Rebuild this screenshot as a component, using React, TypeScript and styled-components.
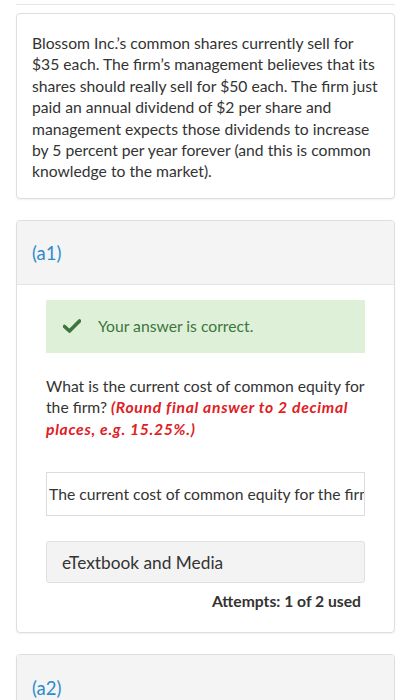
import React from "react";
import styled, { createGlobalStyle } from "styled-components";

const Global = createGlobalStyle`
  html, body { margin: 0; padding: 0; background: #fff; }
  body { font-family: Lato, "Noto Sans", sans-serif; color: #333; }
`;

const Page = styled.div`
  width: 411px;
  height: 700px;
  overflow: hidden;
  display: flex;
  flex-direction: column;
`;

const PrevEdge = styled.div`
  height: 4px;
  margin: 0 16px;
  border-bottom: 1px solid #e6e6e6;
  flex-shrink: 0;
`;

const Card = styled.section<{ $mt: number }>`
  margin: ${(p) => p.$mt}px 16px 0;
  border: 1px solid #dedede;
  border-radius: 4px;
  background: #fff;
  box-shadow: 0 1px 2px rgba(0, 0, 0, 0.06);
  flex-shrink: 0;
  overflow: hidden;
`;

const Intro = styled.p`
  margin: 0;
  padding: 19px 12px 15px 15px;
  font-size: 15.7px;
  line-height: 21.4px;
  color: #333;
`;

const Header = styled.div`
  background: #f4f4f4;
  height: 64px;
  border-bottom: 1px solid #e4e4e4;
  display: flex;
  align-items: center;
  padding: 2px 15px 0;
  box-sizing: border-box;
  font-size: 18.5px;
  color: #2b8ccc;
`;

const Body = styled.div`
  padding: 15px 29px 22px;
  display: flex;
  flex-direction: column;
`;

const Success = styled.div`
  background: #dff0d8;
  height: 53px;
  display: flex;
  align-items: center;
  padding-left: 17px;
  gap: 17px;
  color: #3c763d;
  font-size: 15.7px;
`;

const Question = styled.p`
  margin: 23px 0 0;
  font-size: 15.7px;
  line-height: 21.5px;
  color: #333;
`;

const Hint = styled.em`
  color: #e0201f;
  font-weight: 700;
  letter-spacing: 0.7px;
`;

const AnswerBox = styled.div`
  margin-top: 32px;
  height: 44px;
  border: 1px solid #dcdcdc;
  box-sizing: border-box;
  display: flex;
  align-items: center;
  padding-left: 2px;
  font-size: 15.7px;
  color: #333;
  white-space: nowrap;
  overflow: hidden;
`;

const MediaButton = styled.div`
  margin-top: 25px;
  height: 42px;
  box-sizing: border-box;
  background: #f3f3f3;
  border: 1px solid #e0e0e0;
  border-radius: 3px;
  display: flex;
  align-items: center;
  padding-left: 15px;
  font-size: 17.3px;
  color: #333;
`;

const Attempts = styled.div`
  margin-top: 9px;
  text-align: right;
  padding-right: 4px;
  font-size: 15.7px;
  font-weight: 700;
  color: #333;
`;

const Check = () => (
  <svg width="18" height="14" viewBox="0 0 18 14" aria-hidden="true">
    <path d="M1.5 7.5 L6.5 12 L16.5 2" fill="none" stroke="#3c763d" strokeWidth="3.6" strokeLinecap="round" strokeLinejoin="round" />
  </svg>
);

export default function App() {
  return (
    <Page>
      <Global />
      <PrevEdge />
      <Card $mt={8}>
        <Intro>
          Blossom Inc.’s common shares currently sell for $35 each. The firm’s management believes that its
          shares should really sell for $50 each. The firm just paid an annual dividend of $2 per share and
          management expects those dividends to increase by 5 percent per year forever (and this is common
          knowledge to the market).
        </Intro>
      </Card>
      <Card $mt={21}>
        <Header>(a1)</Header>
        <Body>
          <Success>
            <Check />
            <span>Your answer is correct.</span>
          </Success>
          <Question>
            What is the current cost of common equity for the firm? <Hint>(Round final answer to 2 decimal places, e.g. 15.25%.)</Hint>
          </Question>
          <AnswerBox>The current cost of common equity for the firm is</AnswerBox>
          <MediaButton>eTextbook and Media</MediaButton>
          <Attempts>Attempts: 1 of 2 used</Attempts>
        </Body>
      </Card>
      <Card $mt={21}>
        <Header>(a2)</Header>
      </Card>
    </Page>
  );
}
